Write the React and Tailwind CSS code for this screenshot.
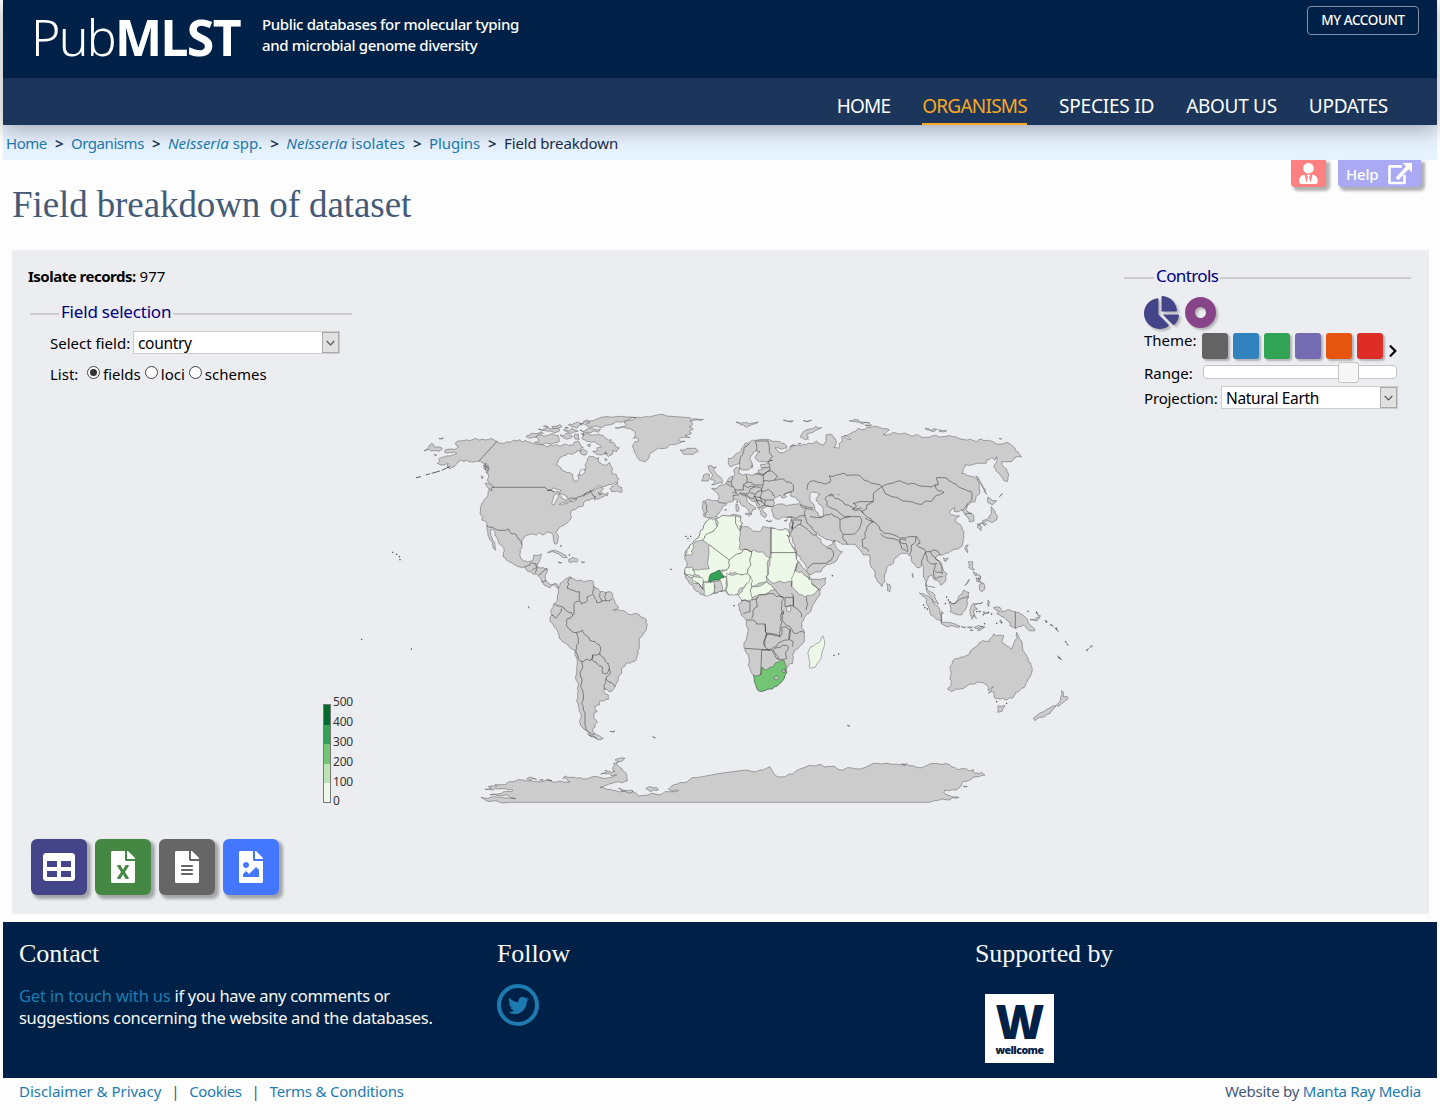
import React from "react";
import {
  FaUserTie,
  FaTable,
  FaFileExcel,
  FaFileAlt,
  FaFileImage,
  FaChartPie,
  FaTwitter,
  FaChevronRight,
} from "react-icons/fa";

const LAND = "#cccccc";
const SEA = "#ecedf1";
const PALE = "#edf8e9";

/* Map shapes are in thirds of a pixel, one group per region. */
const americas = [
  "441,109 415,104 400,103 375,100 350,104 340,106 315,116 325,124 318,131 300,133 285,136 284,142 300,143 312,141 320,145 303,153 275,157 265,163 270,168 262,175 270,180 285,180 295,176 292,184 300,192 312,186 318,178 325,170 335,165 342,170 350,166 365,171 375,169 385,170 392,168 400,175 413,178 416,195 411,205 416,210 412,225 418,235 428,240 430,248 420,250 414,262 414,270 400,290 391,310 390,325 395,345 410,352 411,362 413,380 418,398 420,405 427,415 430,430 438,436 436,425 428,405 422,392 420,375 428,372 435,382 434,390 442,400 446,412 452,420 462,432 462,440 459,455 475,468 495,480 515,488 525,486 535,500 550,507 565,511 573,523 575,530 582,540 590,543 600,549 603,542 615,540 620,548 625,550 622,538 615,535 605,540 595,533 586,528 586,515 592,492 580,488 565,487 560,482 567,472 571,460 575,448 552,450 548,466 535,470 520,468 511,455 510,435 516,419 516,405 525,393 545,387 560,390 568,383 578,390 590,382 603,382 610,390 610,405 615,418 622,415 624,400 618,383 625,372 645,358 660,345 665,335 662,320 670,315 685,305 700,302 705,290 720,284 735,275 733,285 750,280 768,270 772,273 774,262 765,268 752,262 760,250 745,248 725,258 713,268 700,274 725,256 750,243 785,238 800,232 807,222 800,210 788,207 785,200 788,190 778,172 770,180 760,180 745,170 747,158 730,155 718,153 712,165 705,180 708,192 695,200 683,210 686,222 680,230 672,228 668,218 668,208 650,203 635,195 628,185 618,178 625,165 640,152 655,145 668,148 682,136 690,140 692,130 700,128 690,120 685,108 672,112 668,120 655,122 642,118 630,124 618,119 610,123 600,120 590,125 580,121 570,118 560,119 550,115 540,111 530,110 525,106 515,110 510,104 500,108 490,106 480,112 455,115",
  "700,88 715,86 730,90 745,88 760,92 768,100 785,105 780,112 793,115 796,124 808,128 800,140 788,136 785,150 775,155 768,147 755,150 740,148 728,140 742,138 740,130 755,125 745,118 735,110 722,112 705,105 695,100",
  "555,95 575,90 585,93 600,88 625,92 628,110 615,113 605,118 590,114 580,118 565,114 553,112 568,106", "528,95 545,85 575,80 580,85 565,90 557,97 540,100",
  "565,72 590,68 600,72 620,68 630,75 610,82 590,78", "605,65 630,58 635,66 620,70", "690,75 705,78 720,70 735,73 752,72 745,82 715,84 700,82",
  "700,50 725,47 740,42 800,35 858,38 830,48 805,50 790,57 780,60 765,62 750,68 735,64 720,66 705,58 720,52", "655,60 668,58 680,52 695,60 680,70 668,66", "640,75 655,77 665,70 685,78 672,80 660,86",
  "630,90 642,92 655,85 668,95 650,103 640,98", "672,90 685,88 688,103 675,102", "690,140 700,132 712,142 708,150 698,150",
  "580,64 590,62 595,66", "645,68 652,66 655,70", "694,86 702,85 700,92", "712,120 722,118 720,125", "765,160 772,163 768,168", "703,58 690,56 700,53", "765,140 772,145 765,147",
  "780,252 795,240 803,232 805,243 815,247 817,260 810,262 800,258 785,260", "745,262 755,268 748,270",
  "795,68 815,65 830,58 822,53 840,45 870,38 900,36 950,33 1020,38 1025,42 1060,43 1020,48 1028,58 1018,66 1030,72 1018,78 1025,85 1005,92 1020,97 985,105 1005,108 990,114 975,118 955,124 930,130 915,135 905,142 897,158 885,170 872,166 860,155 852,135 850,118 855,110 866,108 862,98 850,100 857,88 850,77 830,70",
  "222,138 236,128 245,115 250,118 252,126 262,126 277,132 265,140 250,137 235,133", "268,99 280,98 278,102 268,102", "252,148 260,151 255,152",
  "592,442 605,436 620,438 640,448 652,458 640,458 625,446 600,442", "655,464 665,458 685,465 680,472 670,470 658,472", "625,470 636,473 626,474", "695,469 704,471 696,473",
  "402,178 412,182 414,198 402,192", "406,234 428,246 426,258 412,246", "394,212 400,216 396,222",
  "625,550 632,533 645,523 660,515 665,520 680,527 700,530 715,527 727,527 730,540 740,550 750,560 770,562 785,563 790,580 800,600 805,608 790,615 805,613 830,623 860,625 875,637 890,645 892,660 885,680 868,700 868,730 860,760 850,770 830,773 815,790 815,805 800,833 790,853 780,860 763,850 762,858 775,870 775,883 760,888 748,890 748,900 735,905 742,920 732,925 732,940 742,950 735,965 728,980 735,985 760,1000 745,1005 720,993 705,975 695,965 690,945 694,930 688,920 685,905 680,885 683,865 685,835 680,795 678,755 675,735 655,723 638,710 625,685 610,660 600,647 600,637 608,630 602,615 610,600 622,585 625,565",
  "393,1177 430,1175 497,1181 440,1171 420,1169 455,1165 485,1160 488,1155 460,1151 450,1151 430,1155 405,1152 425,1149 415,1144 440,1143 435,1139 465,1139 480,1130 530,1127 560,1129 600,1127 640,1131 660,1131 638,1120 645,1113 660,1116 680,1120 720,1118 760,1120 790,1115 800,1110 785,1113 775,1105 752,1108 770,1100 765,1095 785,1102 795,1100 788,1092 795,1080 790,1075 805,1070 795,1065 825,1060 805,1070 800,1078 815,1090 830,1110 832,1127 815,1133 775,1138 750,1148 780,1153 800,1158 830,1160 865,1173 905,1165 945,1160 975,1160 985,1157 955,1152 965,1143 1000,1133 1040,1118 1110,1105 1180,1096 1230,1095 1260,1085 1275,1110 1305,1115 1350,1092 1410,1078 1440,1085 1470,1095 1500,1088 1560,1080 1605,1075 1640,1077 1668,1082 1655,1076 1670,1075 1690,1083 1740,1077 1750,1075 1800,1080 1815,1088 1840,1091 1870,1093 1870,1100 1895,1102 1905,1110 1870,1117 1840,1130 1828,1148 1785,1155 1782,1162 1795,1170 1827,1177 1790,1185 1740,1192 480,1192 430,1187",
  "888,1150 900,1145 920,1148 925,1155 900,1160", "530,1121 560,1123 540,1126", "568,1125 580,1124 578,1127", "590,1124 606,1127 595,1128", "805,1150 825,1156 850,1158 845,1164 815,1158", "1840,1143 1852,1144 1842,1146",
  "780,979 795,977 790,982", "908,994 917,999 910,998", "535,604 538,610 534,606",
];
const americaLines =
  "441,109 387,168 M428,247 583,247 598,256 612,262 M655,285 680,279 700,270 722,256 728,270 738,276 M410,362 430,368 448,376 468,376 475,372 483,385 492,386 500,390 508,403 516,419 M525,486 540,480 545,472 558,476 M558,476 560,487 545,497 M565,487 555,505 M566,511 592,492 M575,530 590,527 M665,517 655,525 652,550 670,557 688,560 688,585 M688,590 672,595 672,630 M688,585 695,598 710,590 712,575 725,570 M730,543 728,565 735,580 740,593 755,590 748,575 752,562 M770,562 763,575 768,587 755,590 M785,580 780,587 768,587 M612,595 640,607 650,617 665,623 668,633 M635,610 630,625 617,640 605,630 M668,633 650,643 648,660 660,675 680,683 685,715 678,735 685,760 695,770 705,765 722,767 728,750 750,748 752,733 735,710 710,693 697,675 680,683 M695,770 690,805 692,845 695,895 705,935 705,960 715,980 735,987 M728,750 727,765 745,780 758,790 757,803 772,805 778,790 775,775 765,765 750,748 M778,790 782,800 768,822 762,840 765,853 M768,822 785,833 797,845 M710,985 740,1000 M405,175 410,205 M400,182 417,190";
const lakes = ["592,257 610,248 632,255 630,262 612,260", "606,298 610,280 620,266 627,268 618,285 612,300", "628,265 645,270 656,280 648,287 636,280", "628,298 650,290 655,293 635,300", "658,288 680,281 680,285 660,290", "690,212 692,195 703,192 705,200"];

const eurasia = [
  "300,175 290,178 270,185 265,178 265,160 290,145 305,130 315,115 330,110 345,106 360,103 385,103 400,110 425,115 440,122 440,130 420,132 405,128 415,140 430,143 438,138 450,132 450,125 480,122 500,118 520,115 530,108 535,115 550,120 558,110 558,90 575,88 585,100 590,115 582,128 595,130 598,115 608,108 605,95 632,103 612,92 635,83 655,70 690,67 715,65 748,75 730,88 755,85 780,87 805,88 835,90 850,98 870,96 890,92 915,94 940,95 970,103 1010,110 1040,106 1060,110 1100,112 1128,138 1145,155 1125,158 1115,170 1085,170 1090,185 1105,205 1102,230 1090,225 1070,200 1062,185 1072,165 1070,155 1065,165 1055,158 1040,165 1038,175 1010,175 977,178 965,205 985,212 1002,215 1018,235 1020,265 1005,290 992,292 978,312 1000,330 1002,348 988,350 982,335 972,325 968,315 955,320 943,320 945,308 928,322 935,330 958,332 945,345 965,365 973,380 970,410 955,432 925,445 900,450 885,460 905,475 920,505 918,520 902,540 895,528 880,522 875,510 865,515 860,545 870,560 885,570 895,598 875,580 858,555 860,530 850,510 850,490 845,475 840,488 830,487 815,455 802,445 785,445 778,450 760,475 740,490 735,530 725,545 705,515 690,475 688,450 670,450 660,435 645,418 618,418 600,412 580,410 560,405 545,395 530,382 528,390 540,400 552,420 560,427 575,420 583,405 585,420 590,430 607,440 595,455 575,475 560,480 515,508 505,510 500,490 480,455 465,420 455,395 448,385 450,370 453,345 455,337 440,337 415,343 400,335 395,315 400,305 378,305 365,310 380,330 375,338 362,328 355,310 345,290 325,278 315,272 320,285 335,300 348,312 338,314 335,330 330,325 320,310 300,290 285,283 275,290 262,293 258,300 248,305 240,320 230,335 205,338 190,332 187,310 190,288 215,286 232,287 235,270 228,262 215,250 230,250 245,240 260,233 275,215 285,208 282,195 290,187 300,190 295,205 310,210 345,207 355,203 355,195 368,192 362,178 385,172 398,166 370,170 350,165 345,155 360,140 350,137 335,150 330,165 337,177 325,195 305,195",
  "120,135 135,135 140,130 160,130 175,138 160,148 130,148", "205,182 215,182 218,188 228,185 220,195 235,212 247,225 247,235 230,237 215,240 225,228 212,223 218,212 210,200", "190,210 200,205 208,208 208,222 205,228 185,228",
  "480,95 490,80 510,72 545,68 530,75 500,88 505,103 490,100", "288,50 300,54 320,52 340,54 355,50 340,58 330,62 320,67 305,60", "430,46 460,48 440,49", "490,47 515,45 500,50",
  "628,48 645,43 660,50 690,55 670,57 645,50", "675,60 695,60 685,63", "855,70 890,72 885,78 865,75", "895,75 920,78 900,80", "1078,99 1085,101 1080,103",
  "452,124 460,118 464,122", "475,115 482,114 480,118", "335,182 339,180 337,188",
  "1043,277 1058,287 1070,287 1055,300 1043,292", "1053,305 1065,320 1070,345 1050,350 1038,349 1025,355 1015,360 1030,345 1048,338 1055,325", "1013,355 1025,365 1023,377 1013,368", "1028,355 1040,356 1032,362",
  "1007,213 1025,240 1040,268 1030,250 1012,215", "1078,275 1088,267 1080,275", "977,422 985,420 983,443 976,435", "910,458 925,460 918,470 912,468",
  "288,296 296,305 294,320 288,318", "290,288 294,290 292,294", "254,313 260,314 256,317", "315,326 332,325 328,333", "378,346 396,348 382,349", "432,347 443,344 438,350", "740,535 752,543 750,560 742,557",
  "838,563 855,570 880,595 900,615 905,650 890,643 865,605", "903,650 930,652 960,663 958,667 930,663 905,657", "964,665 978,666 970,669", "982,667 998,666 990,670", "1002,667 1030,664 1012,671", "990,675 1000,676 994,678",
  "927,590 945,595 955,575 972,555 987,562 983,580 978,610 965,630 945,628 930,620", "993,605 1000,595 1028,591 1025,595 1002,602 1012,613 1002,615 1010,640 1000,630 995,643 990,625",
  "985,470 998,470 997,485 1003,495 993,493 986,488", "1000,500 1010,505 1012,512 1005,512", "1018,540 1032,535 1034,552 1027,560 1018,553", "1008,518 1020,525 1010,530", "1016,518 1024,535 1018,532", "1015,508 1023,515 1020,522",
  "1043,585 1048,590 1045,605", "1030,620 1045,624 1032,626", "1015,618 1023,620 1018,622", "1013,677 1035,665 1022,675", "1082,644 1086,650 1080,652", "904,619 910,625 905,627",
  "1060,608 1080,607 1085,620 1100,615 1125,620 1145,628 1160,640 1165,655 1185,677 1170,678 1150,660 1135,665 1125,670 1110,662 1108,650 1085,635 1070,625 1078,618",
  "1170,645 1190,648 1200,637 1196,635 1186,642", "1190,622 1202,633 1198,633", "1215,645 1220,652", "1235,660 1240,665", "1245,668 1255,680 1248,672",
  "1253,752 1266,764 1262,762", "1338,736 1346,730 1342,738", "1350,725 1358,722 1352,728", "1278,713 1284,722",
  "923,853 933,843 935,830 930,815 933,803 930,790 940,765 960,757 985,750 1000,730 1005,727 1015,717 1030,705 1047,710 1060,687 1068,692 1080,690 1092,693 1085,710 1100,723 1115,733 1122,715 1130,682 1137,695 1145,710 1148,737 1160,755 1165,770 1175,785 1172,810 1158,835 1140,855 1120,877 1100,885 1090,881 1080,883 1065,880 1062,862 1055,858 1045,865 1060,845 1052,850 1046,858 1045,848 1035,837 1020,832 995,837 975,847 950,852 935,860",
  "1075,902 1085,904 1095,902 1085,920 1073,922", "1265,857 1270,862 1270,875 1285,878 1270,893 1255,905 1250,900 1262,885", "1248,902 1235,905 1210,920 1180,940 1185,947 1205,937 1235,917",
  "622,960 630,962 624,964", "818,505 820,517 819,518", "988,523 975,542 978,538",
];
const eurasiaLines =
  "500,255 505,235 530,230 550,235 570,232 568,212 590,210 610,205 630,210 650,210 680,228 700,235 725,245 755,235 775,228 805,238 840,243 885,240 895,240 890,218 915,218 940,235 965,250 992,258 990,290 M725,245 755,275 790,288 845,298 875,288 890,270 912,262 895,258 885,240 M725,245 700,265 700,290 680,300 680,312 665,318 680,335 700,350 720,375 735,385 780,400 805,395 830,395 M640,295 670,290 700,290 M722,385 735,397 780,410 M778,403 785,430 802,440 798,415 780,412 M780,404 795,402 797,408 M830,395 815,420 810,450 M830,395 840,415 830,420 858,440 850,455 845,475 M858,440 865,470 890,475 880,500 M860,440 885,435 900,450 M870,440 890,465 905,485 908,505 885,498 M880,500 885,520 908,515 M675,340 700,350 680,375 675,400 665,405 668,425 685,440 M600,345 630,335 660,335 665,345 660,365 635,388 610,388 600,370 600,345 M610,388 622,418 M510,335 555,330 575,325 600,345 M560,300 555,280 575,270 600,285 620,300 640,310 M560,300 590,315 630,335 M640,295 650,303 640,312 665,310 M965,318 987,292 M975,328 995,325 M635,312 660,315 670,325 M570,275 575,267 582,270 M594,267 598,270 M440,337 495,332 500,310 480,300 M495,332 500,350 515,365 528,382 M452,365 465,368 480,358 520,390 530,390 M453,345 485,345 480,358 M505,490 520,475 560,475 575,465 M575,465 580,440 560,427 M480,297 520,310 M500,310 520,318 M455,345 450,385 M460,350 455,375 M300,175 303,155 312,130 330,115 M350,137 350,120 345,112 350,108 385,108 M385,170 398,155 388,125 385,108 M385,172 390,195 375,205 355,203 M368,188 388,188 M345,207 370,210 375,205 395,198 412,215 405,225 370,228 370,210 M318,210 320,232 345,240 368,240 370,228 M405,226 430,222 440,232 460,240 460,258 430,270 M370,240 365,258 385,253 398,265 405,275 M365,258 360,275 375,285 400,285 M278,215 275,240 285,255 310,255 310,240 320,232 M310,240 325,248 345,243 M300,262 325,265 330,252 M330,265 345,268 365,255 M330,252 365,250 M280,270 300,265 318,270 M258,235 278,245 M262,230 272,230 M278,262 290,265 285,255 M280,270 278,285 M232,287 258,295 M195,290 200,305 195,332 M320,268 340,280 355,290 M345,268 350,285 360,300 M360,275 375,300 M355,308 375,302 395,305 M375,285 375,300 M340,275 360,278 M350,285 368,290 M1126,620 1126,670 M927,590 945,595 965,580 987,577 M903,625 905,650 M860,540 885,548";
const seas = ["400,285 407,278 420,270 425,278 440,275 432,268 455,262 450,272 480,290 476,297 455,300 430,297 400,302 403,290", "510,265 530,262 540,268 527,282 535,292 540,300 545,302 550,325 550,333 535,332 525,315 522,300 510,280"];

const africa = [
  [LAND, "117,-63 140,-66 170,-72 205,-74 213,-70 210,-60 218,-50 213,-42 240,-35 265,-25 275,-30 278,-40 300,-37 330,-30 355,-28 358,-10 350,-15 365,15 378,40 385,65 395,80 415,100 418,112 425,118 450,118 468,113 467,130 450,165 425,205 405,230 395,250 403,275 403,305 385,325 367,345 368,370 350,385 345,405 325,435 305,447 265,452 258,435 250,405 240,385 237,360 225,330 222,320 230,295 235,270 225,235 208,210 205,195 215,183 205,165 190,163 175,165 165,152 130,160 100,165 85,155 70,140 55,122 43,100 50,80 45,45 60,15 75,0 90,-20 100,-35 105,-50"],
  [PALE, "117,-63 138,-60 142,-40 115,-20 98,0 75,5 70,25 65,45 45,47 50,30 60,15 75,0 90,-20 100,-35 105,-50"],
  [PALE, "140,-66 170,-72 198,-72 200,-45 210,-30 207,25 222,28 178,60 98,0 115,-20 142,-40"],
  [PALE, "198,-72 213,-70 210,-60 218,-50 210,-40 210,-28 200,-45"],
  [PALE, "118,15 178,60 175,85 150,92 120,105 115,125 95,125 85,105 72,100 70,88 118,86 115,50"],
  [PALE, "178,60 222,28 245,35 243,75 232,100 210,104 180,98 165,110 155,95 175,85"],
  [PALE, "245,35 250,30 300,55 292,95 290,125 245,140 240,110 232,100 243,75"],
  [PALE, "303,-36 330,-30 355,-28 358,-10 350,-15 365,15 378,38 303,38"],
  [PALE, "303,38 378,38 385,65 375,90 365,125 345,128 330,123 315,130 300,122 290,110 300,75 300,55"],
  [PALE, "375,92 395,95 412,110 425,130 448,150 425,165 405,170 385,162 365,140"],
  [PALE, "245,140 260,140 290,125 315,148 290,160 265,165 245,175 240,150"],
  [PALE, "240,108 245,140 240,150 245,180 215,182 205,165 225,140"],
  [PALE, "170,100 200,102 232,100 240,110 225,140 205,152 200,163 180,165 168,150"],
  [PALE, "150,112 165,110 168,130 165,152 157,153"],
  [PALE, "100,125 133,123 132,158 102,165"],
  [PALE, "65,110 95,112 100,125 98,145 85,130 70,130"],
  [PALE, "45,85 65,80 75,100 70,112 45,105"],
  [LAND, "130,123 150,120 156,153 132,160"],
  ["#31a354", "117,122 118,110 130,98 148,90 153,100 163,112 145,120 130,120 122,127"],
  [PALE, "458,288 463,300 455,340 435,382 420,385 417,360 422,320 440,310"],
  ["#74c476", "250,405 258,408 270,405 275,382 290,390 310,380 330,362 343,362 347,385 350,400 345,405 325,435 305,447 265,452 258,435"],
  [LAND, "313,413 322,408 326,413 318,420"], [LAND, "337,390 345,388 345,397 338,397"],
  [SEA, "350,202 362,198 360,215 350,212"],
];
const africaLines =
  "365,160 370,175 370,200 395,232 M410,170 408,210 M345,172 370,172 370,197 345,200 345,172 M340,212 337,240 365,268 375,280 403,278 M265,165 300,160 340,172 335,200 332,230 335,250 330,290 310,285 290,280 285,252 260,252 250,240 230,240 M245,180 265,170 262,200 245,235 M215,183 240,185 240,215 220,220 M285,252 290,280 285,320 300,330 225,325 M285,320 287,285 330,290 335,262 360,270 355,300 320,318 300,328 M310,330 335,318 355,320 350,355 325,358 310,330 M275,330 305,330 325,358 M275,330 272,405 M362,268 360,300 370,305 368,320 M43,100 70,108 M70,122 85,130 100,150 M375,92 385,65 M412,110 418,120 M425,130 448,150 M210,-30 213,-42 M222,28 245,35 M315,148 340,172 M365,125 365,140 M333,220 342,220 M303,-36 303,55";
const specks = [[128,442],[140,448],[148,455],[150,464],[35,703],[184,732],[963,493],[633,423],[658,450],[1008,394],[1014,400],[1022,394],[1152,602],[1447,512],[1452,751],[1466,747],[1790,576],[1795,585],[1786,596],[1725,608],[1732,612],[1721,600],[1880,620],[1900,629],[1940,655],[1955,653],[2034,619],[2060,622],[2090,650],[2103,660],[2120,670],[2147,710],[2128,758],[1940,890],[1970,895],[1904,656],[1915,622],[1925,627]];

/* Breaks a segment at uneven points so coasts and rivers look natural.
   The offset depends only on the two ends, so neighbours share an edge. */
function roughen(a, b, depth) {
  const [p, q] = a[0] < b[0] || (a[0] === b[0] && a[1] <= b[1]) ? [a, b] : [b, a];
  const dx = q[0] - p[0];
  const dy = q[1] - p[1];
  const len = Math.hypot(dx, dy);
  if (depth === 0 || len < 6 || len > 62 || Math.abs(dx) < 0.01 || Math.abs(dy) < 0.01) return [b];
  const h = Math.sin(p[0] * 12.9898 + p[1] * 78.233 + q[0] * 37.719 + q[1] * 4.581) * 43758.5453;
  const k = (h - Math.floor(h) - 0.5) * 0.36;
  const mid = [p[0] + dx / 2 - dy * k, p[1] + dy / 2 + dx * k];
  return [...roughen(a, mid, depth - 1), ...roughen(mid, b, depth - 1)];
}

function trace(s, closed) {
  const pts = s.trim().split(" ").map((t) => t.split(",").map(Number));
  const out = [pts[0]];
  const last = closed ? pts.length : pts.length - 1;
  for (let i = 0; i < last; i++) out.push(...roughen(pts[i], pts[(i + 1) % pts.length], 2));
  return "M" + out.map(([x, y]) => x.toFixed(1) + "," + y.toFixed(1)).join(" ") + (closed ? "Z" : "");
}
const poly = (s) => trace(s, true);
const lines = (s) => s.split("M").map((t) => trace(t, false)).join(" ");

function WorldMap() {
  return (
    <svg className="absolute inset-0 h-full w-full" viewBox="12 250 1417 664" aria-label="World map">
      <g strokeWidth="1.5" stroke="#000" strokeOpacity="0.6" strokeLinejoin="round">
        <g transform="translate(350 405) scale(.33333)">
          <g fill={LAND}>{americas.map((s, i) => <path key={i} d={poly(s)} />)}</g>
          <g fill={SEA}>{lakes.map((s, i) => <path key={i} d={poly(s)} />)}</g>
          <path fill="none" strokeOpacity="0.8" d={lines(americaLines)} />
          <path fill="none" strokeWidth="3" d="M300,184 L275,196 M270,198 245,205 M240,206 228,210 M213,215 198,218" />
          {specks.map(([x, y], i) => <circle key={i} cx={x} cy={y} r="1.5" fill="#555" />)}
        </g>
        <g transform="translate(640 405) scale(.33333)">
          <g fill={LAND}>{eurasia.map((s, i) => <path key={i} d={poly(s)} />)}</g>
          <g fill={SEA}>{seas.map((s, i) => <path key={i} d={poly(s)} />)}</g>
          <path fill="none" strokeOpacity="0.8" d={lines(eurasiaLines)} />
        </g>
        <g transform="translate(670 540) scale(.33333)">
          {africa.map(([c, s], i) => <path key={i} fill={c} d={poly(s)} />)}
          <path fill="none" strokeOpacity="0.8" d={lines(africaLines)} />
        </g>
      </g>
    </svg>
  );
}

const shadow = "shadow-[3px_3px_3px_1px_rgba(0,0,0,0.3)]";

function Legend({ title, lead, tracking }) {
  return (
    <div className="flex h-6 items-center">
      <span className={`mt-1 h-[2px] bg-[#cccccc] ${lead}`} />
      <span className={`mx-[2px] whitespace-nowrap text-[17px] text-[#000080] ${tracking}`}>{title}</span>
      <span className="mt-1 h-[2px] flex-1 bg-[#cccccc]" />
    </div>
  );
}

function Select({ value, className }) {
  return (
    <div className={`flex h-[23px] border border-[#ccc] bg-white ${className}`}>
      <span className="flex-1 pl-1 text-[15.5px] leading-[22px] tracking-[-0.33px]">{value}</span>
      <span className="flex w-[17px] items-center justify-center border border-[#aaa] bg-[#e1e1e1]">
        <svg width="9" height="6" viewBox="0 0 9 6" fill="none" stroke="#555" strokeWidth="1.2"><path d="M.7 1 4.5 4.8 8.3 1" /></svg>
      </span>
    </div>
  );
}

function Radio({ on, children }) {
  return (
    <label className="flex items-center gap-[3px]">
      <span className="-mt-[2px] flex h-[13px] w-[13px] items-center justify-center rounded-full border border-[#444] bg-white">
        {on && <span className="h-[7px] w-[7px] rounded-full bg-[#333]" />}
      </span>
      {children}
    </label>
  );
}

function Crumb({ children, className = "tracking-[0px]" }) {
  return (
    <>
      <span className={`text-[#1d7baf] ${className}`}>{children}</span>
      <span className="w-2 font-semibold text-[#1a2d4a]">&gt;</span>
    </>
  );
}

function HelpIcon() {
  return (
    <svg width="25" height="23" viewBox="0 0 25 23" fill="none" stroke="#fff" strokeWidth="2.6" strokeLinejoin="round">
      <path d="M14 4.4H1.5V21H16.5V13" />
      <path d="M9 17 20 5" strokeWidth="3.6" />
      <path d="M14.5 1H24V10.5Z" fill="#fff" stroke="none" />
    </svg>
  );
}

const navItems = [
  ["HOME", "tracking-[-0.8px]"],
  ["ORGANISMS", "tracking-[-0.75px] border-b-2 border-[#f9a825] text-[#f9a825]"],
  ["SPECIES ID", "tracking-[-0.2px]"],
  ["ABOUT US", "tracking-[-0.3px]"],
  ["UPDATES", "tracking-[-0.3px]"],
];
const bands = ["bg-[#006d2c]", "bg-[#31a354]", "bg-[#74c476]", "bg-[#bae4b3]", "bg-[#edf8e9]"];
const themes = ["bg-[#636363]", "bg-[#3182bd]", "bg-[#31a354]", "bg-[#756bb1]", "bg-[#e6550d]", "bg-[#de2d26]"];
const exportsList = [
  [FaTable, "bg-[#448]"],
  [FaFileExcel, "bg-[#484]"],
  [FaFileAlt, "bg-[#666]"],
  [FaFileImage, "bg-[#47f]"],
];

export default function App() {
  return (
    <div className="h-[1120px] w-[1440px] overflow-hidden bg-[#fdfdfd] px-[3px] font-['Noto_Sans',sans-serif] text-[15px] text-black">
      <header className="relative z-10 shadow-[0_5px_20px_rgba(0,0,0,0.3)]">
        <div className="flex h-[78px] items-start bg-[#002147] text-white">
          <div className="ml-[28px] mt-[10px] w-[231px] whitespace-nowrap text-[50px] leading-[54px] tracking-[-1.7px]">
            <span className="font-[350]">Pub</span><span className="font-bold">MLST</span>
          </div>
          <p className="mt-[14px] text-[15px] font-medium leading-[21px] tracking-[-0.37px]">
            Public databases for molecular typing<br />and microbial genome diversity
          </p>
          <button className="ml-auto mr-[18px] mt-[6px] h-[29px] w-[112px] rounded border border-[#8491a4] text-[13.5px] font-medium tracking-[-0.4px]">MY ACCOUNT</button>
        </div>
        <nav className="flex h-[47px] items-end justify-end gap-8 bg-[#1b365a] pr-[49px] text-[19px] text-white">
          {navItems.map(([t, c]) => (
            <span key={t} className={`h-[34px] leading-[30px] ${c}`}>{t}</span>
          ))}
        </nav>
      </header>
      <div className="flex h-[35px] items-center gap-2 bg-[#e7f2ff] pl-[3px] pt-px">
        <Crumb className="tracking-[-0.45px]">Home</Crumb>
        <Crumb className="tracking-[-0.43px]">Organisms</Crumb>
        <Crumb><i>Neisseria</i> spp.</Crumb>
        <Crumb className="tracking-[0.03px]"><i>Neisseria</i> isolates</Crumb>
        <Crumb className="tracking-[-0.1px]">Plugins</Crumb>
        <span className="tracking-[-0.15px] text-[#1a2d4a]">Field breakdown</span>
      </div>
      <div className="flex h-[90px] items-start justify-between pl-[9px] pr-4">
        <h1 className="mt-[22px] whitespace-nowrap font-['Liberation_Serif',serif] text-[37px] leading-[46px] tracking-[-0.1px] text-[#435a78]">Field breakdown of dataset</h1>
        <div className="flex gap-3 text-white">
          <span className={`flex h-[27px] w-[35px] items-center justify-center rounded-b bg-[#ff8080] ${shadow}`}><FaUserTie size={21} /></span>
          <span className={`flex h-[27px] w-[83px] items-center justify-between rounded-b bg-[#aaaaf4] px-2 font-medium tracking-[-0.2px] ${shadow}`}><span className="mt-[2px]">Help</span><HelpIcon /></span>
        </div>
      </div>

      <main className="relative ml-[9px] flex h-[664px] w-[1417px] flex-col justify-between bg-[#ecedf1]">
        <WorldMap />
        <div className="relative flex justify-between">
          <section className="ml-4 mt-[14px] w-[324px]">
            <p className="leading-6"><b className="font-bold tracking-[-0.5px]">Isolate records:</b> 977</p>
            <div className="ml-[2px] mt-[11.5px]"><Legend title="Field selection" lead="w-[29px]" tracking="tracking-[-0.2px]" /></div>
            <div className="ml-[22px] mt-[7px] flex h-[24px] items-center gap-[3px]">
              <span className="mt-px w-20 whitespace-nowrap">Select field:</span><Select value="country" className="w-[207px]" />
            </div>
            <div className="ml-[22px] mt-2 flex items-center gap-1">
              <span className="w-[33px]">List:</span>
              <Radio on>fields</Radio><Radio>loci</Radio><Radio>schemes</Radio>
            </div>
          </section>
          <section className="mr-[18px] mt-[14px] w-[287px]">
            <Legend title="Controls" lead="w-[30px]" tracking="tracking-[-0.6px]" />
            <div className="ml-[19px] mt-[7px] flex items-center gap-[5px]">
              <FaChartPie size={36} color="#448" className="mt-px h-[33px] w-[37px] drop-shadow-[2px_2px_1px_rgba(0,0,0,0.25)]" />
              <span className="h-[31px] w-[31px] rounded-full border-[10.5px] border-[#848] drop-shadow-[2px_2px_1px_rgba(0,0,0,0.25)]" />
            </div>
            <div className="ml-5 mt-[3px] flex h-[26px]">
              <span className="-mt-[3px] w-[58px]">Theme:</span>
              <div className="mt-px flex gap-[5px]">
                {themes.map((c) => <span key={c} className={`h-[26px] w-[26px] rounded-[3px] shadow-[2px_2px_2px_rgba(0,0,0,0.25)] ${c}`} />)}
              </div>
              <FaChevronRight size={14} className="ml-[3px] mt-3" />
            </div>
            <div className="ml-5 mt-[3px] flex h-[22px] items-center">
              <span className="mt-[3px] w-[59px]">Range:</span>
              <div className="flex h-[14px] w-[194px] items-center rounded-[3px] border border-[#c5c5c5] bg-white">
                <span className="ml-[134px] h-[21px] w-[21px] shrink-0 rounded-[3px] border border-[#c5c5c5] bg-[#f6f6f6]" />
              </div>
            </div>
            <div className="ml-5 mt-[3px] flex items-center">
              <span className="mt-px w-[77px] whitespace-nowrap tracking-[-0.15px]">Projection:</span><Select value="Natural Earth" className="w-[177px]" />
            </div>
          </section>
        </div>
        <div className="relative">
          <div className="mb-[28px] ml-[311px] flex">
            <div className="mt-[9px] flex h-[99px] w-2 flex-col border border-[#777]">
              {bands.map((b) => <span key={b} className={`flex-1 ${b}`} />)}
            </div>
            <div className="-mt-[3px] ml-[2px] flex h-[118.6px] flex-col text-[12px] leading-[19.8px] tracking-[-0.2px] text-[#333]">
              {[500, 400, 300, 200, 100, 0].map((n) => <span key={n} className="h-[19.8px]">{n}</span>)}
            </div>
          </div>
          <div className="mb-[19px] ml-[19.4px] flex gap-2">
            {exportsList.map(([Icon, c], i) => (
              <span key={i} className={`flex h-14 w-14 items-center justify-center rounded-md text-white ${shadow} ${c}`}><Icon size={32} /></span>
            ))}
          </div>
        </div>
      </main>

      <footer className="mt-2">
        <div className="flex h-[156px] bg-[#002147] text-[#f8f8f8]">
          {[0, 1, 2].map((n) => (
            <div key={n} className="w-[478px] pl-4 pt-4">
              <h2 className="font-['Liberation_Serif',serif] text-[26px] leading-[32px] tracking-[-0.1px]">{["Contact", "Follow", "Supported by"][n]}</h2>
              {n === 0 && (
                <p className="mt-[15px] whitespace-nowrap text-[16.5px] leading-[22px] tracking-[-0.32px]"><span className="tracking-[-0.15px] text-[#1d7baf]">Get in touch with us</span> if you have any comments or<br />suggestions concerning the website and the databases.</p>
              )}
              {n === 1 && (
                <span className="mt-[14px] flex h-[42px] w-[42px] items-center justify-center rounded-full border-4 border-[#1d7baf] text-[#1d7baf]"><FaTwitter size={21} /></span>
              )}
              {n === 2 && (
                <div className="ml-[10px] mt-6 flex h-[69px] w-[69px] flex-col items-center bg-white font-['Open_Sans',sans-serif] text-[#002147]">
                  <span className="mt-[7px] h-10 text-[47px] font-extrabold leading-10 tracking-[-1px]">W</span>
                  <span className="text-[10.5px] font-extrabold leading-[18px] tracking-[-0.5px]">wellcome</span>
                </div>
              )}
            </div>
          ))}
        </div>
        <div className="flex h-[26px] items-center justify-between px-4 text-[#435a78]">
          <div className="flex gap-3">
            <span className="tracking-[-0.03px] text-[#1d7baf]">Disclaimer &amp; Privacy</span>
            <span className="flex w-1 justify-center">|</span>
            <span className="tracking-[-0.4px] text-[#1d7baf]">Cookies</span>
            <span className="flex w-1 justify-center">|</span>
            <span className="tracking-[-0.2px] text-[#1d7baf]">Terms &amp; Conditions</span>
          </div>
          <div className="tracking-[-0.25px]">Website by <span className="text-[#1d7baf]">Manta Ray Media</span></div>
        </div>
      </footer>
    </div>
  );
}
